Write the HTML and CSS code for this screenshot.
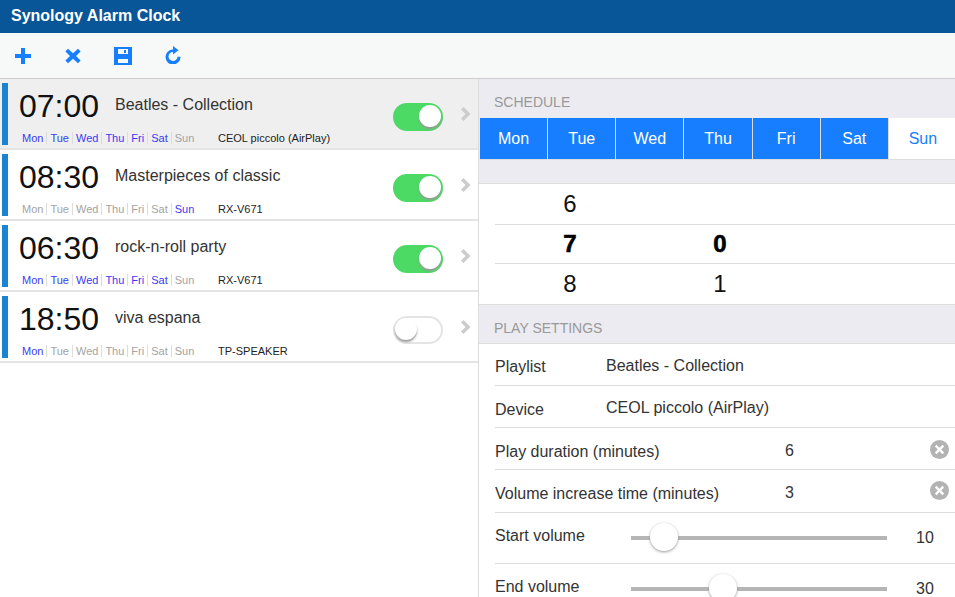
FILE: index.html
```html
<!DOCTYPE html>
<html>
  <head>
    <meta charset="utf-8"/>
    <title>Synology Alarm Clock</title>
    <link rel="stylesheet" href="styles.css">
  </head>
  <body>
    <div class="page">
      <div class="titlebar">Synology Alarm Clock</div>

      <div class="toolbar">
        <svg class="tool tool-add" viewBox="0 0 16 16"><path d="M6 0h4v6h6v4h-6v6H6v-6H0V6h6z"/></svg>
        <svg class="tool tool-del" viewBox="0 0 16 16"><path d="M3 .8 8 5.300 13 .8 15.600 3.400 11 8l4.600 4.600L13 15.200 8 10.700 3 15.200.4 12.600 5 8 .4 3.400z"/></svg>
        <svg class="tool tool-save" viewBox="0 0 18 18"><path fill-rule="evenodd" d="M0 0h18v18H0zM4 2v5h10V2zM10 3h2v3h-2zM4 12v4h10v-4z"/></svg>
        <svg class="tool tool-reload" viewBox="0 0 16 18"><path d="M8 3.500V0l5.500 4.300L8 8.500V6a4.500 4.500 0 1 0 4.500 4.700h3A7.500 7.500 0 1 1 8 3.500z"/></svg>
      </div>

      <div class="main">
        <div class="alarm-list">
          <div class="alarm alarm-selected">
            <div class="alarm-mark"></div>
            <div class="alarm-body">
              <div class="alarm-top">
                <span class="alarm-time">07:00</span>
                <span class="alarm-name">Beatles - Collection</span>
              </div>
              <div class="alarm-bottom">
                <div class="days">
                  <span class="on">Mon</span><span class="on">Tue</span><span class="on">Wed</span><span class="on">Thu</span><span class="on">Fri</span><span class="on">Sat</span><span>Sun</span>
                </div>
                <span class="alarm-device">CEOL piccolo (AirPlay)</span>
              </div>
            </div>
            <div class="switch switch-on"><div class="knob"></div></div>
            <svg class="chevron" viewBox="0 0 10 14"><path d="M2.500 0 9.500 7l-7 7L0 11.500 4.500 7 0 2.500z"/></svg>
          </div>

          <div class="alarm">
            <div class="alarm-mark"></div>
            <div class="alarm-body">
              <div class="alarm-top">
                <span class="alarm-time">08:30</span>
                <span class="alarm-name">Masterpieces of classic</span>
              </div>
              <div class="alarm-bottom">
                <div class="days">
                  <span>Mon</span><span>Tue</span><span>Wed</span><span>Thu</span><span>Fri</span><span>Sat</span><span class="on">Sun</span>
                </div>
                <span class="alarm-device">RX-V671</span>
              </div>
            </div>
            <div class="switch switch-on"><div class="knob"></div></div>
            <svg class="chevron" viewBox="0 0 10 14"><path d="M2.500 0 9.500 7l-7 7L0 11.500 4.500 7 0 2.500z"/></svg>
          </div>

          <div class="alarm">
            <div class="alarm-mark"></div>
            <div class="alarm-body">
              <div class="alarm-top">
                <span class="alarm-time">06:30</span>
                <span class="alarm-name">rock-n-roll party</span>
              </div>
              <div class="alarm-bottom">
                <div class="days">
                  <span class="on">Mon</span><span class="on">Tue</span><span class="on">Wed</span><span class="on">Thu</span><span class="on">Fri</span><span class="on">Sat</span><span>Sun</span>
                </div>
                <span class="alarm-device">RX-V671</span>
              </div>
            </div>
            <div class="switch switch-on"><div class="knob"></div></div>
            <svg class="chevron" viewBox="0 0 10 14"><path d="M2.500 0 9.500 7l-7 7L0 11.500 4.500 7 0 2.500z"/></svg>
          </div>

          <div class="alarm">
            <div class="alarm-mark"></div>
            <div class="alarm-body">
              <div class="alarm-top">
                <span class="alarm-time">18:50</span>
                <span class="alarm-name">viva espana</span>
              </div>
              <div class="alarm-bottom">
                <div class="days">
                  <span class="on">Mon</span><span>Tue</span><span>Wed</span><span>Thu</span><span>Fri</span><span>Sat</span><span>Sun</span>
                </div>
                <span class="alarm-device">TP-SPEAKER</span>
              </div>
            </div>
            <div class="switch"><div class="knob"></div></div>
            <svg class="chevron" viewBox="0 0 10 14"><path d="M2.500 0 9.500 7l-7 7L0 11.500 4.500 7 0 2.500z"/></svg>
          </div>
        </div>

        <div class="detail">
          <div class="section-head">SCHEDULE</div>
          <div class="weekdays">
            <div class="weekday active">Mon</div>
            <div class="weekday active">Tue</div>
            <div class="weekday active">Wed</div>
            <div class="weekday active">Thu</div>
            <div class="weekday active">Fri</div>
            <div class="weekday active">Sat</div>
            <div class="weekday">Sun</div>
          </div>
          <div class="gap"></div>

          <div class="picker">
            <div class="picker-row"><span class="picker-h">6</span><span class="picker-m"></span></div>
            <div class="picker-row picker-current"><span class="picker-h">7</span><span class="picker-m">0</span></div>
            <div class="picker-row"><span class="picker-h">8</span><span class="picker-m">1</span></div>
          </div>

          <div class="section-head section-play">PLAY SETTINGS</div>
          <div class="settings">
            <div class="setting"><span class="setting-label short">Playlist</span><span>Beatles - Collection</span></div>
            <div class="setting setting-device"><span class="setting-label short">Device</span><span>CEOL piccolo (AirPlay)</span></div>
            <div class="setting setting-low">
              <span class="setting-label">Play duration (minutes)</span><span class="setting-value">6</span>
              <svg class="clear" viewBox="0 0 20 20"><circle cx="10" cy="10" r="10"/><path d="M6 6l8 8M14 6l-8 8"/></svg>
            </div>
            <div class="setting setting-tall">
              <span class="setting-label">Volume increase time (minutes)</span><span class="setting-value">3</span>
              <svg class="clear" viewBox="0 0 20 20"><circle cx="10" cy="10" r="10"/><path d="M6 6l8 8M14 6l-8 8"/></svg>
            </div>
            <div class="setting setting-slider">
              <span class="slider-label">Start volume</span>
              <div class="slider"><div class="thumb" style="left: 13%"></div></div>
              <span class="slider-value">10</span>
            </div>
            <div class="setting setting-slider">
              <span class="slider-label">End volume</span>
              <div class="slider"><div class="thumb" style="left: 36%"></div></div>
              <span class="slider-value">30</span>
            </div>
          </div>
        </div>
      </div>
    </div>
  </body>
</html>
```

FILE: styles.css
```css
html, body {
  height: 100%;
  padding: 0;
  margin: 0;
}
body {
  font-family: "Liberation Sans", Arial, sans-serif;
  color: #222;
  background-color: #fff;
}
.page {
  display: flex;
  flex-direction: column;
  height: 597px;
  overflow: hidden;
}
.titlebar {
  background-color: #085597;
  color: #fff;
  font-size: 16px;
  font-weight: bold;
  height: 33px;
  line-height: 31px;
  padding-left: 11px;
  flex: none;
}
.toolbar {
  display: flex;
  align-items: center;
  background-color: #f7f9f9;
  border-bottom: #ccc 1px solid;
  flex: none;
  box-sizing: border-box;
  height: 46px;
  padding-left: 15px;
}
.tool {
  fill: #177eff;
  display: block;
}
.tool-add {
  width: 16px;
  height: 16px;
  margin-right: 34px;
}
.tool-del {
  width: 16px;
  height: 16px;
  margin-right: 33px;
}
.tool-save {
  width: 18px;
  height: 18px;
  margin-right: 33px;
  margin-top: 1px;
}
.tool-reload {
  width: 16px;
  height: 18px;
  margin-top: -1px;
}
.main {
  display: flex;
  flex: 1;
  min-height: 0;
}

/* alarm list */
.alarm-list {
  width: 478px;
  flex: none;
  border-right: #ddd 1px solid;
}
.alarm {
  display: flex;
  align-items: flex-start;
  height: 71px;
  box-sizing: border-box;
  border-bottom: #e4e4e4 2px solid;
  padding: 4px 0 0 2px;
}
.alarm-selected {
  background-color: #efefef;
}
.alarm-mark {
  background-color: #1a84d3;
  width: 6px;
  height: 62px;
  flex: none;
}
.alarm-body {
  width: 385px;
  flex: none;
  padding-left: 11px;
  box-sizing: border-box;
}
.alarm-top {
  display: flex;
  align-items: baseline;
  height: 47px;
}
.alarm-time {
  font-size: 32px;
  color: #111;
  width: 96px;
  line-height: 47px;
}
.alarm-name {
  font-size: 16px;
  color: #333;
  position: relative;
  top: -7px;
}
.alarm-bottom {
  display: flex;
  align-items: center;
  height: 15px;
  padding-left: 3px;
  font-size: 11px;
}
.days {
  display: flex;
  width: 196px;
  flex: none;
  color: #a3a3a3;
}
.days span {
  padding: 0 3px;
  border-right: #ddd 1px solid;
}
.days span:first-child {
  padding-left: 0;
}
.days span:last-child {
  border-right: 0;
}
.days .on {
  color: #3a3af5;
}
.alarm-device {
  color: #222;
}
.switch {
  width: 50px;
  height: 28px;
  box-sizing: border-box;
  border-radius: 14px;
  background-color: #fff;
  border: #e4e4e4 2px solid;
  margin: 20px 0 0 0;
  position: relative;
  flex: none;
}
.switch-on {
  background-color: #4cd964;
  border-color: #4cd964;
}
.knob {
  position: absolute;
  width: 22px;
  height: 22px;
  top: 0;
  left: 0;
  border-radius: 50%;
  background-color: #fff;
  box-shadow: 0 2px 2px #999;
}
.switch-on .knob {
  left: 24px;
}
.chevron {
  width: 10px;
  height: 14px;
  fill: #ccc;
  margin: 24px 0 0 18px;
  flex: none;
}

/* detail */
.detail {
  flex: 1;
  min-width: 0;
  background-color: #ecebf1;
  overflow: hidden;
}
.section-head {
  color: #999;
  font-size: 14px;
  height: 39px;
  line-height: 47px;
  padding-left: 15px;
  box-sizing: border-box;
}
.section-play {
  height: 39px;
  line-height: 47px;
  border-bottom: #ddd 1px solid;
}
.weekdays {
  display: flex;
  height: 41px;
  margin-left: 1px;
  border-bottom: #ddd 1px solid;
  background-color: #fff;
}
.weekday {
  width: 68.150px;
  flex: none;
  text-align: center;
  font-size: 16px;
  line-height: 41px;
  color: #177eff;
  box-sizing: border-box;
}
.weekday.active {
  background-color: #177eff;
  color: #fff;
  border-right: #ddd 1px solid;
}
.gap {
  height: 23px;
}
.picker {
  background-color: #fff;
  border-top: #ddd 1px solid;
  border-bottom: #ddd 1px solid;
  padding-left: 16px;
  height: 122px;
  box-sizing: border-box;
}
.picker-row {
  display: flex;
  height: 40px;
  align-items: center;
  font-size: 24px;
  color: #111;
  box-sizing: border-box;
}
.picker-current {
  border-top: #ddd 1px solid;
  border-bottom: #ddd 1px solid;
  font-weight: bold;
  color: #000;
  -webkit-text-stroke: 0.600px #000;
}
.picker-h {
  width: 150px;
  text-align: center;
}
.picker-m {
  width: 150px;
  text-align: center;
}
.settings {
  background-color: #fff;
  padding-left: 16px;
}
.setting {
  display: flex;
  align-items: center;
  height: 42px;
  box-sizing: border-box;
  border-bottom: #ddd 1px solid;
  padding-top: 2px;
  font-size: 16px;
  color: #333;
}
.setting-low {
  padding-top: 4px;
}
.setting-tall {
  height: 43px;
}
.setting-tall .setting-value {
  padding-top: 2px;
}
.setting-device .setting-label {
  padding-top: 5px;
}
.setting-label {
  width: 290px;
  flex: none;
  padding-top: 3px;
}
.setting-label.short {
  width: 111px;
}
.setting-value {
  width: 145px;
  flex: none;
}
.clear {
  width: 19px;
  height: 19px;
  margin-top: -3px;
}
.clear circle {
  fill: #b3b3b3;
}
.clear path {
  stroke: #fff;
  stroke-width: 2.500px;
  fill: none;
}
.setting-slider {
  height: 51px;
  padding-top: 0;
}
.slider-label {
  width: 136px;
  flex: none;
  margin-top: -5px;
}
.slider {
  width: 256px;
  height: 4px;
  background-color: #b5b5b5;
  position: relative;
  flex: none;
}
.thumb {
  position: absolute;
  width: 28px;
  height: 28px;
  top: -13px;
  margin-left: -14px;
  border-radius: 50%;
  background-color: #fff;
  box-shadow: 0 1px 3px #999;
}
.slider-value {
  margin-left: 29px;
  font-size: 16px;
}
```
